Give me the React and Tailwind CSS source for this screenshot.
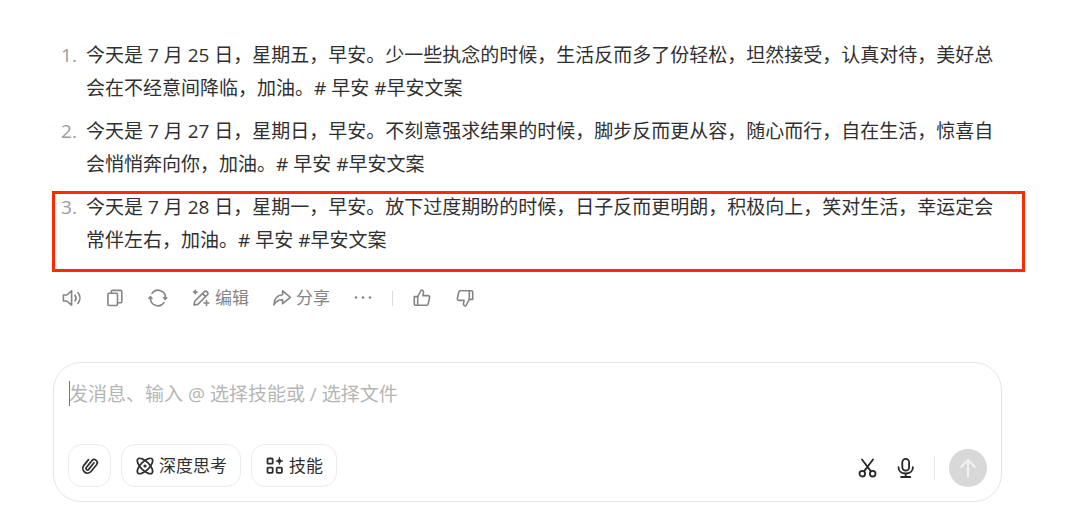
import React from "react";

function Icon({ children, className = "size-5", width = 1.6 }) {
  return (
    <svg
      viewBox="0 0 20 20"
      className={`shrink-0 ${className}`}
      fill="none"
      stroke="currentColor"
      strokeWidth={width}
      strokeLinecap="round"
      strokeLinejoin="round"
      aria-hidden="true"
    >
      {children}
    </svg>
  );
}

const thumb = (
  <>
    <path d="M2.3 8.6h3.4v8.6H3.5a1.2 1.2 0 0 1-1.2-1.2z" />
    <path d="M5.7 8.6 9.2 2c1.600 0 2.600 1.200 2.300 2.700l-.6 2.900h5c1.300 0 2 .9 1.700 2.100l-1.400 6c-.2.9-.8 1.500-1.700 1.500H5.700" />
  </>
);

const icons = {
  speaker: (
    <Icon>
      <path d="M1.400 7h3.400l4.800-4.200v14.400L4.800 13H1.400z" />
      <path d="M13 7.200c1.300 1.700 1.300 3.900 0 5.600M15.900 4.600c2.700 3.200 2.700 7.600 0 10.800" />
    </Icon>
  ),
  copy: (
    <Icon>
      <rect x="2.900" y="5.200" width="9.600" height="12.300" rx="1.200" />
      <path d="M6.300 5.200V3.400a1 1 0 0 1 1-1h8.500a1 1 0 0 1 1 1v10.400a1 1 0 0 1-1 1h-3.300" />
    </Icon>
  ),
  refresh: (
    <Icon>
      <path d="M4 5.400A7.400 7.400 0 0 1 17.400 10.500M16 14.600A7.400 7.400 0 0 1 2.600 9.500" />
      <path d="M15.600 9.600h3.600l-1.800 2.200zM.8 10.400h3.600L2.600 8.200z" fill="currentColor" strokeWidth="1" />
    </Icon>
  ),
  edit: (
    <Icon>
      <path d="m3 17 .7-3.700L13.400 3.600a1.600 1.600 0 0 1 2.300 0l.8.8a1.600 1.600 0 0 1 0 2.300l-9.700 9.700zM11.500 5.600l3 3" />
      <path d="M4.300 2.300v3.600M2.500 4.100h3.600M15.500 12.600v4.800M13.100 15h4.800" />
    </Icon>
  ),
  share: (
    <Icon>
      <path d="M10.600 2.800 18.400 9.300 10.600 15.700v-3.900c-4-.2-6.600 1.400-8.700 5C2 10.800 5.100 7.200 10.600 6.700z" />
    </Icon>
  ),
  more: (
    <Icon>
      <g fill="currentColor" stroke="none">
        <circle cx="3" cy="9.500" r="1.300" />
        <circle cx="10" cy="9.500" r="1.300" />
        <circle cx="17" cy="9.500" r="1.300" />
      </g>
    </Icon>
  ),
  like: <Icon>{thumb}</Icon>,
  dislike: (
    <Icon>
      <g transform="rotate(180 10 10)">{thumb}</g>
    </Icon>
  ),
  clip: (
    <Icon width={1.700}>
      <path d="m14 6.800-5.300 6.600a1.500 1.500 0 0 1-2.400-1.900l5.600-6.900a3.100 3.100 0 0 1 4.800 3.900l-5.700 7a4.700 4.700 0 0 1-7.300-5.900l4.800-6" />
    </Icon>
  ),
  atom: (
    <Icon width={1.700}>
      <ellipse cx="10" cy="10" rx="10" ry="4.300" transform="rotate(45 10 10)" />
      <ellipse cx="10" cy="10" rx="10" ry="4.300" transform="rotate(-45 10 10)" />
      <circle cx="10" cy="10" r="1.600" fill="currentColor" stroke="none" />
    </Icon>
  ),
  skills: (
    <Icon width={1.800}>
      <rect x="2.500" y="2.500" width="5.200" height="5.200" rx=".8" />
      <rect x="2.500" y="11.700" width="5.200" height="5.200" rx=".8" />
      <rect x="11.700" y="11.700" width="5.200" height="5.200" rx=".8" />
      <path
        d="M14.400 1.300c.5 2.400 1.200 3.100 3.600 3.700-2.400.6-3.100 1.300-3.600 3.700-.5-2.400-1.200-3.100-3.600-3.700 2.400-.6 3.100-1.300 3.600-3.700z"
        fill="currentColor"
        strokeWidth=".6"
      />
    </Icon>
  ),
  scissors: (
    <Icon width={1.800}>
      <circle cx="4.300" cy="15.700" r="2.800" />
      <circle cx="14.700" cy="15.700" r="2.800" />
      <path d="M4 1.500 13 13.400M15 1.500 6 13.400" />
    </Icon>
  ),
  mic: (
    <Icon width={1.800}>
      <rect x="6.300" y=".9" width="6.800" height="11.800" rx="3.400" />
      <path d="M2.500 9.200c0 4 3 6.300 7.200 6.300s7.200-2.300 7.200-6.300M9.700 15.500v3.400M5.100 19h9.200" />
    </Icon>
  ),
  send: (
    <Icon className="size-6" width={1.700}>
      <path d="M10 17V3.500M4.300 9 10 3.300 15.700 9" />
    </Icon>
  ),
};

const messages = [
  "今天是 7 月 25 日,星期五,早安。少一些执念的时候,生活反而多了份轻松,坦然接受,认真对待,美好总会在不经意间降临,加油。# 早安 #早安文案",
  "今天是 7 月 27 日,星期日,早安。不刻意强求结果的时候,脚步反而更从容,随心而行,自在生活,惊喜自会悄悄奔向你,加油。# 早安 #早安文案",
  "今天是 7 月 28 日,星期一,早安。放下过度期盼的时候,日子反而更明朗,积极向上,笑对生活,幸运定会常伴左右,加油。# 早安 #早安文案",
].map((text) => text.replaceAll(",", "\uff0c"));

function ToolButton({ icon, label, text }) {
  return (
    <button type="button" aria-label={label} className="flex items-center gap-1 text-[17px] leading-6">
      {icons[icon]}
      {text}
    </button>
  );
}

function Chip({ icon, label, text }) {
  return (
    <button
      type="button"
      aria-label={label}
      className="flex h-[43px] min-w-[43px] items-center justify-center gap-1 rounded-[14px] border border-[#ebebeb] text-[17px] text-[#303030] has-[span]:px-[13px]"
    >
      {icons[icon]}
      {text && <span>{text}</span>}
    </button>
  );
}

export default function App() {
  return (
    <main
      lang="zh-CN"
      className="min-h-screen bg-white pt-[39px] pr-[78px] pb-1 pl-[53px] font-['Open_Sans','Noto_Sans_CJK_SC',sans-serif]"
    >
      <ol className="flex flex-col gap-[10px] text-[19px] leading-[33px] text-[#303030]">
        {messages.map((text, i) => (
          <li key={i} className="relative flex pr-2 pl-2">
            <span className="w-[25px] shrink-0 text-[#9a9a9a]">{i + 1}.</span>
            <p className="min-w-0 flex-1">{text}</p>
            {i === 2 && (
              <span className="pointer-events-none absolute top-0 -right-[23px] -bottom-[15px] -left-px border-3 border-[#ff2a00]" />
            )}
          </li>
        ))}
      </ol>

      <div className="mt-[29px] flex h-6 items-center gap-[23px] pl-[9px] text-[#858585]">
        <ToolButton icon="speaker" label="朗读" />
        <ToolButton icon="copy" label="复制" />
        <ToolButton icon="refresh" label="重新生成" />
        <ToolButton icon="edit" label="编辑" text="编辑" />
        <ToolButton icon="share" label="分享" text="分享" />
        <ToolButton icon="more" label="更多" />
        <span className="-mx-1 h-[15px] w-px bg-[#dcdcdc]" />
        <ToolButton icon="like" label="赞" />
        <ToolButton icon="dislike" label="踩" />
      </div>

      <form
        className="mt-[52px] rounded-[28px] border border-[#e4e4e4] p-[14px]"
        onSubmit={(event) => event.preventDefault()}
      >
        <div className="relative">
          <textarea
            rows={1}
            aria-label="发消息"
            placeholder="发消息、输入 @ 选择技能或 / 选择文件"
            className="block h-[67px] w-full resize-none pt-px pl-px text-[19px] leading-[33px] caret-[#3b82f6] outline-none placeholder:text-[#b5b5b5]"
          />
          <span className="pointer-events-none absolute top-1 left-px h-[25px] w-px bg-[#3b7cff]" />
        </div>
        <div className="flex items-end gap-[10px]">
          <Chip icon="clip" label="添加附件" />
          <Chip icon="atom" label="深度思考" text="深度思考" />
          <Chip icon="skills" label="技能" text="技能" />
          <div className="ml-auto flex items-center gap-[18px] text-[#262626]">
            <button type="button" aria-label="截图">
              {icons.scissors}
            </button>
            <button type="button" aria-label="语音输入">
              {icons.mic}
            </button>
            <span className="h-6 w-px bg-[#e8e8e8]" />
            <button
              type="submit"
              aria-label="发送"
              className="-ml-1 flex size-[38px] items-center justify-center rounded-full bg-[#d8d8d8] text-[#f2f2f2]"
            >
              {icons.send}
            </button>
          </div>
        </div>
      </form>
    </main>
  );
}
